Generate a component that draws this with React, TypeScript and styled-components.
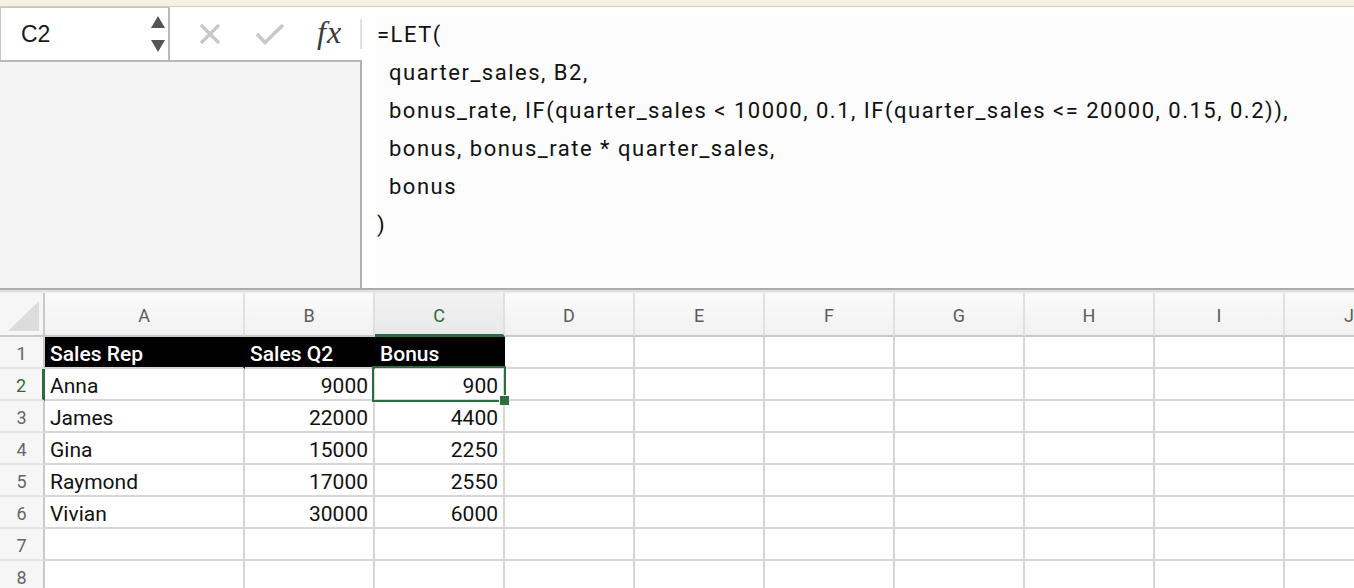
import React from "react";
import styled, { createGlobalStyle, css } from "styled-components";

const GREEN = "#2f6b41";
const GRID = "#d6d6d6";

const GlobalStyle = createGlobalStyle`
  html, body { margin: 0; padding: 0; background: #ffffff; }
  body { font-family: Roboto, "Liberation Sans", Arial, sans-serif; overflow: hidden; }
  * { box-sizing: border-box; }
`;

const Page = styled.div`
  width: 1354px;
  height: 588px;
  overflow: hidden;
  display: flex;
  flex-direction: column;
  background: #ffffff;
`;

const TitleStrip = styled.div`
  height: 7px;
  flex: none;
  background: #f7f1e2;
  border-bottom: 1px solid #d6cdb8;
`;

const FormulaBar = styled.div`
  height: 281px;
  flex: none;
  display: flex;
`;

const LeftPane = styled.div`
  width: 362px;
  flex: none;
  display: flex;
  flex-direction: column;
`;

const NameRow = styled.div`
  height: 53px;
  flex: none;
  display: flex;
`;

const NameBox = styled.div`
  width: 170px;
  display: flex;
  align-items: center;
  padding-left: 20px;
  padding-right: 3px;
  background: #ffffff;
  border-top: 1px solid #c8c8c8;
  border-left: 1px solid #c4c4c4;
  border-right: 2px solid #b9b9b9;
  font-family: "Liberation Sans", Arial, sans-serif;
  font-size: 23px;
  color: #1a1a1a;
`;

const NameText = styled.span`
  flex: 1;
  padding-top: 1px;
`;

const Spinner = styled.div`
  display: flex;
  flex-direction: column;
  justify-content: space-between;
  height: 36px;
  width: 14px;
`;

const ActionIcons = styled.div`
  flex: 1;
  display: flex;
  align-items: center;
  padding-left: 28px;
  background: #ffffff;
`;

const IconSlot = styled.div<{ $w: number; $gap?: number }>`
  width: ${(p) => p.$w}px;
  margin-left: ${(p) => p.$gap ?? 0}px;
  display: flex;
  align-items: center;
  justify-content: center;
`;

const Fx = styled.span`
  margin-left: 32px;
  font-family: "Liberation Serif", "DejaVu Serif", serif;
  font-style: italic;
  font-size: 32px;
  letter-spacing: 1px;
  color: #3a3a3a;
  line-height: 1;
  padding-bottom: 3px;
`;

const Separator = styled.div`
  width: 2px;
  height: 30px;
  margin-left: auto;
  background: #e0e0e0;
`;

const ExpandPanel = styled.div`
  flex: 1;
  background: #f4f4f4;
  border-top: 2px solid #b8b8b8;
  border-right: 2px solid #b0b0b0;
`;

const FormulaArea = styled.div`
  flex: 1;
  background: #ffffff;
  padding: 9px 0 0 14px;
`;

const FormulaText = styled.div`
  background: #fcfcfc;
  height: 100%;
  padding-left: 1px;
  font-family: Roboto, "Liberation Sans", sans-serif;
  font-size: 22px;
  color: #111111;
  letter-spacing: 1.5px;
`;

const FormulaLine = styled.div<{ $indent?: boolean }>`
  height: 38px;
  line-height: 38px;
  white-space: pre;
  padding-left: ${(p) => (p.$indent ? 12 : 0)}px;
`;

const Divider = styled.div`
  height: 5px;
  flex: none;
  border-top: 2px solid #acacac;
  background: #e2e2e2;
  border-bottom: 1px solid #ececec;
`;

const Sheet = styled.div`
  flex: 1;
  display: grid;
  grid-template-columns: 45px 200px repeat(9, 130px);
  grid-auto-rows: 32px;
  grid-template-rows: 44px;
  overflow: hidden;
`;

const Corner = styled.div`
  background: #f6f6f6;
  border-right: 2px solid #c9c9c9;
  border-bottom: 2px solid #c9c9c9;
  display: flex;
  align-items: flex-end;
  justify-content: flex-end;
  padding: 0 4px 4px 0;
`;

const ColHeader = styled.div<{ $selected?: boolean }>`
  display: flex;
  align-items: center;
  justify-content: center;
  padding-top: 3px;
  font-size: 18px;
  color: #5b5b5b;
  background: linear-gradient(#fbfbfb, #f1f1f1);
  border-right: 2px solid #e0e0e0;
  border-bottom: 2px solid #c9c9c9;
  ${(p) =>
    p.$selected &&
    css`
      color: ${GREEN};
      background: linear-gradient(#f2f2f2, #e9e9e9);
      border-bottom: 3px solid ${GREEN};
    `}
`;

const RowHeader = styled.div<{ $selected?: boolean }>`
  display: flex;
  align-items: center;
  justify-content: center;
  padding-top: 2px;
  font-size: 18px;
  color: #666666;
  background: #f6f6f6;
  border-right: 2px solid #c9c9c9;
  border-bottom: 2px solid #e3e3e3;
  ${(p) =>
    p.$selected &&
    css`
      color: ${GREEN};
      border-right: 3px solid ${GREEN};
    `}
`;

const Cell = styled.div<{ $head?: boolean; $num?: boolean; $selected?: boolean }>`
  position: relative;
  z-index: ${(p) => (p.$selected ? 2 : "auto")};
  display: flex;
  align-items: center;
  justify-content: ${(p) => (p.$num ? "flex-end" : "flex-start")};
  padding: 3px 5px 0 5px;
  font-size: 21px;
  color: #111111;
  white-space: nowrap;
  border-right: 2px solid ${GRID};
  border-bottom: 2px solid ${GRID};
  ${(p) =>
    p.$head &&
    css`
      background: #000000;
      color: #ffffff;
      font-weight: 500;
      border-right-color: #000000;
      border-bottom-color: ${GRID};
    `}
`;

const SelectionFrame = styled.div`
  position: absolute;
  left: -3px;
  top: -3px;
  right: -3px;
  bottom: -3px;
  border: 2.5px solid ${GREEN};
  pointer-events: none;
`;

const FillHandle = styled.div`
  position: absolute;
  right: -5px;
  bottom: -5px;
  width: 9px;
  height: 9px;
  background: ${GREEN};
  box-shadow: -1px -1px 0 #ffffff;
`;

const columns = ["A", "B", "C", "D", "E", "F", "G", "H", "I", "J"];

type Row = [string, string, string];
const rows: Row[] = [
  ["Sales Rep", "Sales Q2", "Bonus"],
  ["Anna", "9000", "900"],
  ["James", "22000", "4400"],
  ["Gina", "15000", "2250"],
  ["Raymond", "17000", "2550"],
  ["Vivian", "30000", "6000"],
  ["", "", ""],
  ["", "", ""],
];

const formula: { text: string; indent?: boolean }[] = [
  { text: "=LET(" },
  { text: "quarter_sales, B2,", indent: true },
  {
    text: "bonus_rate, IF(quarter_sales < 10000, 0.1, IF(quarter_sales <= 20000, 0.15, 0.2)),",
    indent: true,
  },
  { text: "bonus, bonus_rate * quarter_sales,", indent: true },
  { text: "bonus", indent: true },
  { text: ")" },
];

export default function App() {
  return (
    <Page>
      <GlobalStyle />
      <TitleStrip />
      <FormulaBar>
        <LeftPane>
          <NameRow>
            <NameBox>
              <NameText>C2</NameText>
              <Spinner>
                <svg width="14" height="12" viewBox="0 0 14 12">
                  <polygon points="7,0 14,12 0,12" fill="#555555" />
                </svg>
                <svg width="14" height="12" viewBox="0 0 14 12">
                  <polygon points="0,0 14,0 7,12" fill="#555555" />
                </svg>
              </Spinner>
            </NameBox>
            <ActionIcons>
              <IconSlot $w={24}>
                <svg width="22" height="22" viewBox="0 0 22 22">
                  <path d="M2 2 L20 20 M20 2 L2 20" stroke="#c8c8c8" strokeWidth="3.4" fill="none" />
                </svg>
              </IconSlot>
              <IconSlot $w={30} $gap={33}>
                <svg width="30" height="22" viewBox="0 0 30 22">
                  <path d="M2 11 L10 19.5 L28 2" stroke="#c8c8c8" strokeWidth="3.6" fill="none" />
                </svg>
              </IconSlot>
              <Fx>fx</Fx>
              <Separator />
            </ActionIcons>
          </NameRow>
          <ExpandPanel />
        </LeftPane>
        <FormulaArea>
          <FormulaText>
            {formula.map((l, i) => (
              <FormulaLine key={i} $indent={l.indent}>
                {l.text}
              </FormulaLine>
            ))}
          </FormulaText>
        </FormulaArea>
      </FormulaBar>
      <Divider />
      <Sheet>
        <Corner>
          <svg width="31" height="30" viewBox="0 0 31 30">
            <polygon points="31,0 31,30 0,30" fill="#dcdcdc" />
          </svg>
        </Corner>
        {columns.map((c) => (
          <ColHeader key={c} $selected={c === "C"}>
            {c}
          </ColHeader>
        ))}
        {rows.map((r, ri) => (
          <React.Fragment key={ri}>
            <RowHeader $selected={ri === 1}>{ri + 1}</RowHeader>
            {columns.map((c, ci) => {
              const value = ci < 3 ? r[ci] : "";
              const head = ri === 0 && ci < 3;
              const num = ri > 0 && (ci === 1 || ci === 2);
              const selected = ri === 1 && ci === 2;
              return (
                <Cell key={c} $head={head} $num={num} $selected={selected}>
                  {value}
                  {selected && (
                    <SelectionFrame>
                      <FillHandle />
                    </SelectionFrame>
                  )}
                </Cell>
              );
            })}
          </React.Fragment>
        ))}
      </Sheet>
    </Page>
  );
}
